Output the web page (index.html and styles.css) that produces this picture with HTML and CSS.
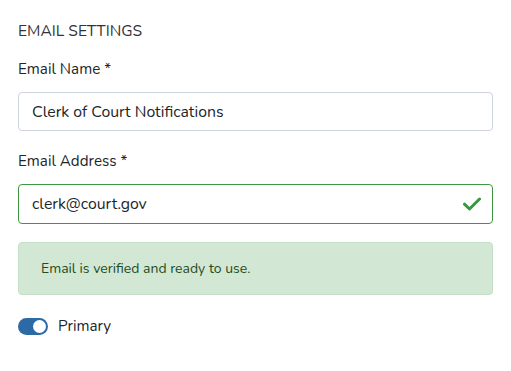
FILE: index.html
```html
<!DOCTYPE html>
<html lang="en">
  <head>
    <meta charset="UTF-8" />
    <meta name="viewport" content="width=device-width, initial-scale=1.0" />
    <title>Email settings</title>
    <link rel="stylesheet" href="styles.css">
  </head>
  <body>
    <div class="panel">
      <h2 class="section-title">EMAIL SETTINGS</h2>

      <div class="field">
        <label class="label" for="emailName">Email Name *</label>
        <input class="input" id="emailName" type="text" value="Clerk of Court Notifications" />
      </div>

      <div class="field">
        <label class="label" for="emailAddress">Email Address *</label>
        <div class="input-wrap">
          <input class="input valid" id="emailAddress" type="text" value="clerk@court.gov" />
          <svg class="check" viewBox="0 0 18 14" width="18" height="14">
            <path d="M1.5 7.2 L6.5 12 L16.5 2" fill="none" stroke="#3b963f" stroke-width="3" stroke-linecap="round" stroke-linejoin="round" />
          </svg>
        </div>
      </div>

      <div class="alert">Email is verified and ready to use.</div>

      <label class="switch">
        <span class="track"><span class="knob"></span></span>
        Primary
      </label>
    </div>
  </body>
</html>
```

FILE: styles.css
```css
* {
  margin: 0;
  padding: 0;
  box-sizing: border-box;
}
body {
  font-family: "Nunito", "Open Sans", "Noto Sans", sans-serif;
  color: #212529;
  background: #fff;
}
.panel {
  padding: 21px 18px 0 18px;
  width: 511px;
}
.section-title {
  font-size: 15.6px;
  font-weight: 400;
  line-height: 20px;
  color: #333;
  margin-bottom: 17px;
}
.field {
  margin-bottom: 19px;
}
.label {
  display: block;
  font-size: 15.2px;
  line-height: 22px;
  margin-bottom: 12px;
}
.input {
  display: block;
  width: 100%;
  height: 39px;
  padding: 0 13px;
  font-family: inherit;
  font-size: 15.8px;
  color: #212529;
  border: 1px solid #ced4da;
  border-radius: 4px;
  background: #fff;
}
.input-wrap {
  position: relative;
}
.input.valid {
  height: 40px;
  border-color: #3b963f;
}
.check {
  position: absolute;
  right: 12px;
  top: 13px;
}
.alert {
  margin-top: -1px;
  height: 53px;
  padding: 0 22px;
  display: flex;
  align-items: center;
  font-size: 14px;
  color: #1f4d23;
  background: #d2e8d4;
  border: 1px solid #c3dfc6;
  border-radius: 4px;
  margin-bottom: 21px;
}
.switch {
  display: flex;
  align-items: center;
  gap: 10px;
  font-size: 15.2px;
}
.track {
  width: 30px;
  height: 17px;
  border-radius: 9px;
  background: #2c6aa6;
  position: relative;
}
.knob {
  position: absolute;
  right: 2px;
  top: 2px;
  width: 13px;
  height: 13px;
  border-radius: 50%;
  background: #fff;
}
```
